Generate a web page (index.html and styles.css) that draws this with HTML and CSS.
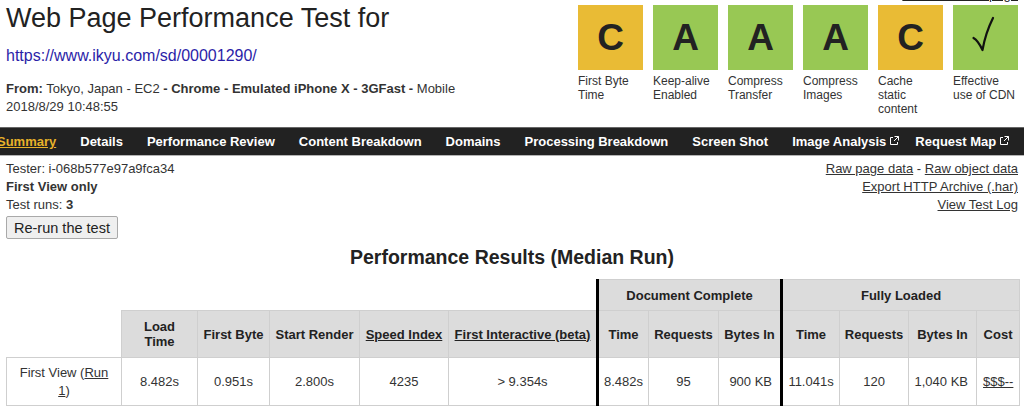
FILE: index.html
```html
<!DOCTYPE html>
<html>

<head>
    <meta charset="UTF-8">
    <title>WebPageTest Test Result</title>
    <link rel="stylesheet" href="styles.css">
</head>

<body>
    <div class="topLinks"><a href="javascript:;">Share this test page</a></div>

    <div class="header">
        <div class="testInfo">
            <h1>Web Page Performance Test for</h1>
            <a class="url" href="javascript:;">https://www.ikyu.com/sd/00001290/</a>
            <p class="from"><b>From:</b> Tokyo, Japan - EC2 <b>- Chrome - Emulated iPhone X - 3GFast -</b> Mobile<br>2018/8/29 10:48:55</p>
        </div>
        <ul class="grades">
            <li><span class="grade gradeC">C</span>First Byte Time</li>
            <li><span class="grade gradeA">A</span>Keep-alive Enabled</li>
            <li><span class="grade gradeA">A</span>Compress Transfer</li>
            <li><span class="grade gradeA">A</span>Compress Images</li>
            <li><span class="grade gradeC">C</span>Cache static content</li>
            <li>
                <span class="grade gradeA">
                    <svg width="65" height="65" viewBox="0 0 65 65"><path d="M20.5 33 Q25 35.5 29.5 45 Q32.5 28 40 13" fill="none" stroke="#111" stroke-width="2.2" stroke-linecap="round" stroke-linejoin="round"/></svg>
                </span>Effective use of CDN
            </li>
        </ul>
    </div>

    <div class="nav">
        <div class="navItems">
            <a href="javascript:;" class="active">Summary</a><a href="javascript:;">Details</a><a href="javascript:;">Performance Review</a><a href="javascript:;">Content Breakdown</a><a href="javascript:;">Domains</a><a href="javascript:;">Processing Breakdown</a><a href="javascript:;">Screen Shot</a><a href="javascript:;" class="ext">Image Analysis<svg width="10" height="10" viewBox="0 0 10 10"><path d="M4 1.5H1.5V8.5H8.5V6" fill="none" stroke="#fff"/><path d="M5.5 .5H9.5V4.5M9.5 .5L5 5" fill="none" stroke="#fff"/></svg></a><a href="javascript:;" class="ext">Request Map<svg width="10" height="10" viewBox="0 0 10 10"><path d="M4 1.5H1.5V8.5H8.5V6" fill="none" stroke="#fff"/><path d="M5.5 .5H9.5V4.5M9.5 .5L5 5" fill="none" stroke="#fff"/></svg></a>
        </div>
    </div>

    <div class="summary">
        <div class="runInfo">
            <p>Tester: i-068b577e97a9fca34</p>
            <p><b>First View only</b></p>
            <p>Test runs: <b>3</b></p>
            <button class="rerun">Re-run the test</button>
        </div>
        <div class="rawLinks">
            <p><a href="javascript:;">Raw page data</a> - <a href="javascript:;">Raw object data</a></p>
            <p><a href="javascript:;">Export HTTP Archive (.har)</a></p>
            <p><a href="javascript:;">View Test Log</a></p>
        </div>
    </div>

    <h2>Performance Results (Median Run)</h2>

    <table class="results">
        <colgroup>
            <col class="cLabel"><col class="cLoad"><col class="cTtfb"><col class="cRender"><col class="cSpeed"><col class="cTti">
            <col class="cDocTime"><col class="cDocReq"><col class="cDocBytes">
            <col class="cFullTime"><col class="cFullReq"><col class="cFullBytes"><col class="cCost">
        </colgroup>
        <tr class="groupRow">
            <th colspan="6" class="blank"></th>
            <th colspan="3" class="sep">Document Complete</th>
            <th colspan="4" class="sep">Fully Loaded</th>
        </tr>
        <tr class="headRow">
            <th class="blank"></th>
            <th class="narrow">Load Time</th>
            <th>First Byte</th>
            <th>Start Render</th>
            <th><a href="javascript:;">Speed Index</a></th>
            <th><a href="javascript:;">First Interactive (beta)</a></th>
            <th class="sep">Time</th>
            <th>Requests</th>
            <th>Bytes In</th>
            <th class="sep">Time</th>
            <th>Requests</th>
            <th>Bytes In</th>
            <th>Cost</th>
        </tr>
        <tr class="dataRow">
            <td class="label">First View (<a href="javascript:;">Run 1</a>)</td>
            <td>8.482s</td>
            <td>0.951s</td>
            <td>2.800s</td>
            <td>4235</td>
            <td>&gt; 9.354s</td>
            <td class="sep">8.482s</td>
            <td>95</td>
            <td class="right">900 KB</td>
            <td class="sep">11.041s</td>
            <td>120</td>
            <td class="right">1,040 KB</td>
            <td class="cost"><a href="javascript:;">$$$--</a></td>
        </tr>
    </table>
</body>

</html>
```

FILE: styles.css
```css
* {
    margin: 0;
    padding: 0;
    list-style: none;
}

body {
    font-family: "Liberation Sans", Arial, sans-serif;
    font-size: 13px;
    color: #222;
    background-color: #fff;
    overflow: hidden;
}

a {
    color: #222;
}

.topLinks {
    margin: -13px 6px 0 0;
    line-height: 16px;
    text-align: right;
}

.header {
    display: flex;
    height: 124px;
    padding: 0 6px;
}

.testInfo {
    flex: 1;
}

h1 {
    font-size: 27px;
    font-weight: normal;
    line-height: 31px;
    color: #222;
}

.url {
    display: block;
    margin-top: 12px;
    font-size: 16px;
    line-height: 20px;
    color: #2b1ea8;
    text-decoration: none;
}

.from {
    margin-top: 14px;
    line-height: 18px;
    color: #333;
}

.grades {
    display: flex;
    gap: 10px;
    margin-top: 2px;
}

.grades li {
    width: 65px;
    font-size: 12px;
    line-height: 14px;
    color: #333;
}

.grade {
    display: block;
    height: 65px;
    margin-bottom: 4px;
    font-size: 37px;
    font-weight: bold;
    line-height: 65px;
    text-align: center;
    color: #222;
}

.grade svg {
    display: block;
}

.gradeA {
    background-color: #98c854;
}

.gradeC {
    background-color: #e9bb35;
}

.nav {
    height: 27px;
    overflow: hidden;
    border-top: solid 1px #666;
    border-bottom: solid 1px #b4b4b4;
    background-color: #222;
}

.navItems {
    display: flex;
    margin-left: -15px;
    white-space: nowrap;
}

.navItems a {
    padding: 0 12px;
    line-height: 27px;
    font-weight: bold;
    color: #fff;
    text-decoration: none;
}

.navItems .active {
    color: #e8b22a;
    text-decoration: underline;
}

.navItems .ext {
    padding-right: 4px;
}

.navItems .ext svg {
    margin-left: 3px;
}

.summary {
    display: flex;
    justify-content: space-between;
    padding: 4px 6px 0 6px;
    line-height: 18px;
    color: #333;
}

.rawLinks {
    text-align: right;
}

.rawLinks a {
    color: #333;
}

.rerun {
    display: block;
    height: 23px;
    margin-top: 2px;
    padding: 0 7px;
    font-family: "Liberation Sans", Arial, sans-serif;
    font-size: 14.5px;
    color: #222;
    background-color: #efefef;
    border: solid 1px #a9a9a9;
    border-radius: 2px;
}

h2 {
    margin-top: 6px;
    font-size: 19.5px;
    line-height: 24px;
    text-align: center;
    color: #222;
}

.results {
    width: 1013px;
    margin: 10px 0 0 6px;
    border-collapse: collapse;
    table-layout: fixed;
    text-align: center;
}

.results th,
.results td {
    padding: 0 3px;
    border: solid 1px #cfcfcf;
    white-space: nowrap;
}

.results th {
    background-color: #dcdcdc;
    color: #222;
}

.results td {
    color: #333;
    line-height: 18px;
}

.results td a {
    color: #333;
}

.results .narrow,
.results .label {
    padding: 0 7px;
    white-space: normal;
}

.results .blank {
    background: none;
    border: none;
}

.results .sep {
    border-left: solid 3px #000;
}

.results .right {
    padding-right: 8px;
    text-align: right;
}

.results .cost {
    text-align: left;
    padding-left: 6px;
}

.groupRow th {
    height: 30px;
}

.headRow th {
    height: 46px;
}

.dataRow td {
    height: 47px;
}

.cLabel { width: 115px; }
.cLoad { width: 76px; }
.cTtfb { width: 72px; }
.cRender { width: 90px; }
.cSpeed { width: 89px; }
.cTti { width: 149px; }
.cDocTime { width: 51px; }
.cDocReq { width: 70px; }
.cDocBytes { width: 63px; }
.cFullTime { width: 58px; }
.cFullReq { width: 69px; }
.cFullBytes { width: 68px; }
.cCost { width: 43px; }
```
